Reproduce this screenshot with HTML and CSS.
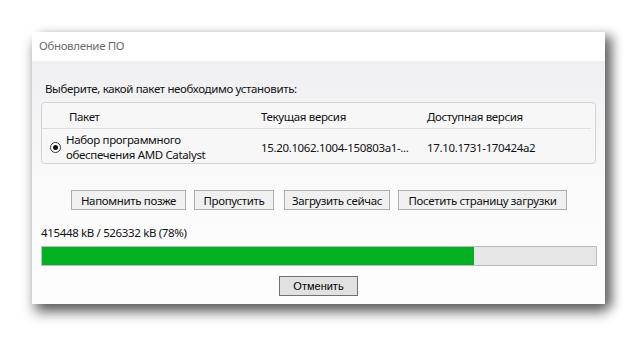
FILE: index.html
```html
<!DOCTYPE html>
<html lang="ru">
<head>
<meta charset="UTF-8" />
<title>Обновление ПО</title>
<link rel="stylesheet" href="styles.css">
</head>
<body>

<div class="dialog">
  <div class="title">Обновление ПО</div>

  <div class="content">
    <div class="prompt">Выберите, какой пакет необходимо установить:</div>

    <div class="table">
      <div class="row head">
        <span class="cell mark"></span>
        <span class="cell name">Пакет</span>
        <span class="cell cur">Текущая версия</span>
        <span class="cell avail">Доступная версия</span>
      </div>
      <div class="row item">
        <span class="cell mark"><span class="radio"></span></span>
        <span class="cell name">Набор программного<br>обеспечения AMD Catalyst</span>
        <span class="cell cur">15.20.1062.1004-150803a1-...</span>
        <span class="cell avail">17.10.1731-170424a2</span>
      </div>
    </div>

    <div class="actions">
      <button class="btn w1">Напомнить позже</button>
      <button class="btn w2">Пропустить</button>
      <button class="btn w3">Загрузить сейчас</button>
      <button class="btn w4">Посетить страницу загрузки</button>
    </div>

    <div class="status">415448 kB / 526332 kB (78%)</div>
    <div class="bar"><div class="fill" style="width: 78%"></div></div>

    <div class="bottom">
      <button class="cancel">Отменить</button>
    </div>
  </div>
</div>

</body>
</html>
```

FILE: styles.css
```css
html, body { height: 100%; }
body { margin: 0; padding: 32px 0 0 32px; box-sizing: border-box; background: #fff; font-family: "Noto Sans", "Open Sans", sans-serif; font-size: 11.5px; letter-spacing: -0.35px; color: #111; }

.dialog { width: 573px; height: 272px; display: flex; flex-direction: column;
  box-shadow: 2px 9px 12px rgba(0,0,0,.45), 8px 3px 10px rgba(0,0,0,.4); background: #fff; }
.title { height: 29px; line-height: 27px; padding-left: 7px; color: #6d6d6d; background: #fff; }

.content { flex: 1; padding: 0 9px; background: linear-gradient(#efeff2, #fbfbfb 55%, #fdfdfd); }
.prompt { margin-top: 20px; height: 16px; line-height: 16px; padding-left: 4px; }

.table { margin-top: 5px; height: 60px; border: 1px solid #d3d3d3; border-radius: 4px; background: #f7f7f8; }
.row { display: flex; align-items: center; }
.head { height: 24px; padding-top: 1px; margin-right: 4px; border-bottom: 1px solid #dcdcdc; }
.item { height: 36px; }
.cell { white-space: nowrap; }
.mark { width: 24px; padding-left: 8px; box-sizing: border-box; }
.name { width: 195px; line-height: 15px; }
.head .name { padding-left: 3px; box-sizing: border-box; }
.cur { width: 166px; }
.avail { flex: 1; }

.radio { display: block; width: 11px; height: 11px; border: 1px solid #333; border-radius: 50%; background: #fff;
  box-sizing: border-box; position: relative; }
.radio::after { content: ""; position: absolute; left: 2px; top: 2px; width: 5px; height: 5px; border-radius: 50%; background: #111; }

.actions { display: flex; gap: 8px; margin: 26px 0 0 30px; }
.btn { height: 20px; padding: 0; font: inherit; letter-spacing: inherit; color: #111; background: #f0f0f0; border: 1px solid #adadad; }
.w1 { width: 115px; }
.w2 { width: 80px; margin-right: 2px; }
.w3 { width: 106px; }
.w4 { width: 169px; }

.status { margin-top: 15px; height: 16px; line-height: 16px; }
.bar { margin-top: 5px; height: 20px; width: 556px; box-sizing: border-box; border: 1px solid #bcbcbc; background: #e6e6e6; }
.fill { height: 100%; background: #06b025; }

.bottom { display: flex; justify-content: center; margin-top: 10px; }
.cancel { width: 79px; height: 20px; padding: 0; font-family: "Liberation Sans", Arial, sans-serif; font-size: 11px;
  letter-spacing: 0; color: #000; background: #e1e1e1; border: 1px solid #707070; }
```
